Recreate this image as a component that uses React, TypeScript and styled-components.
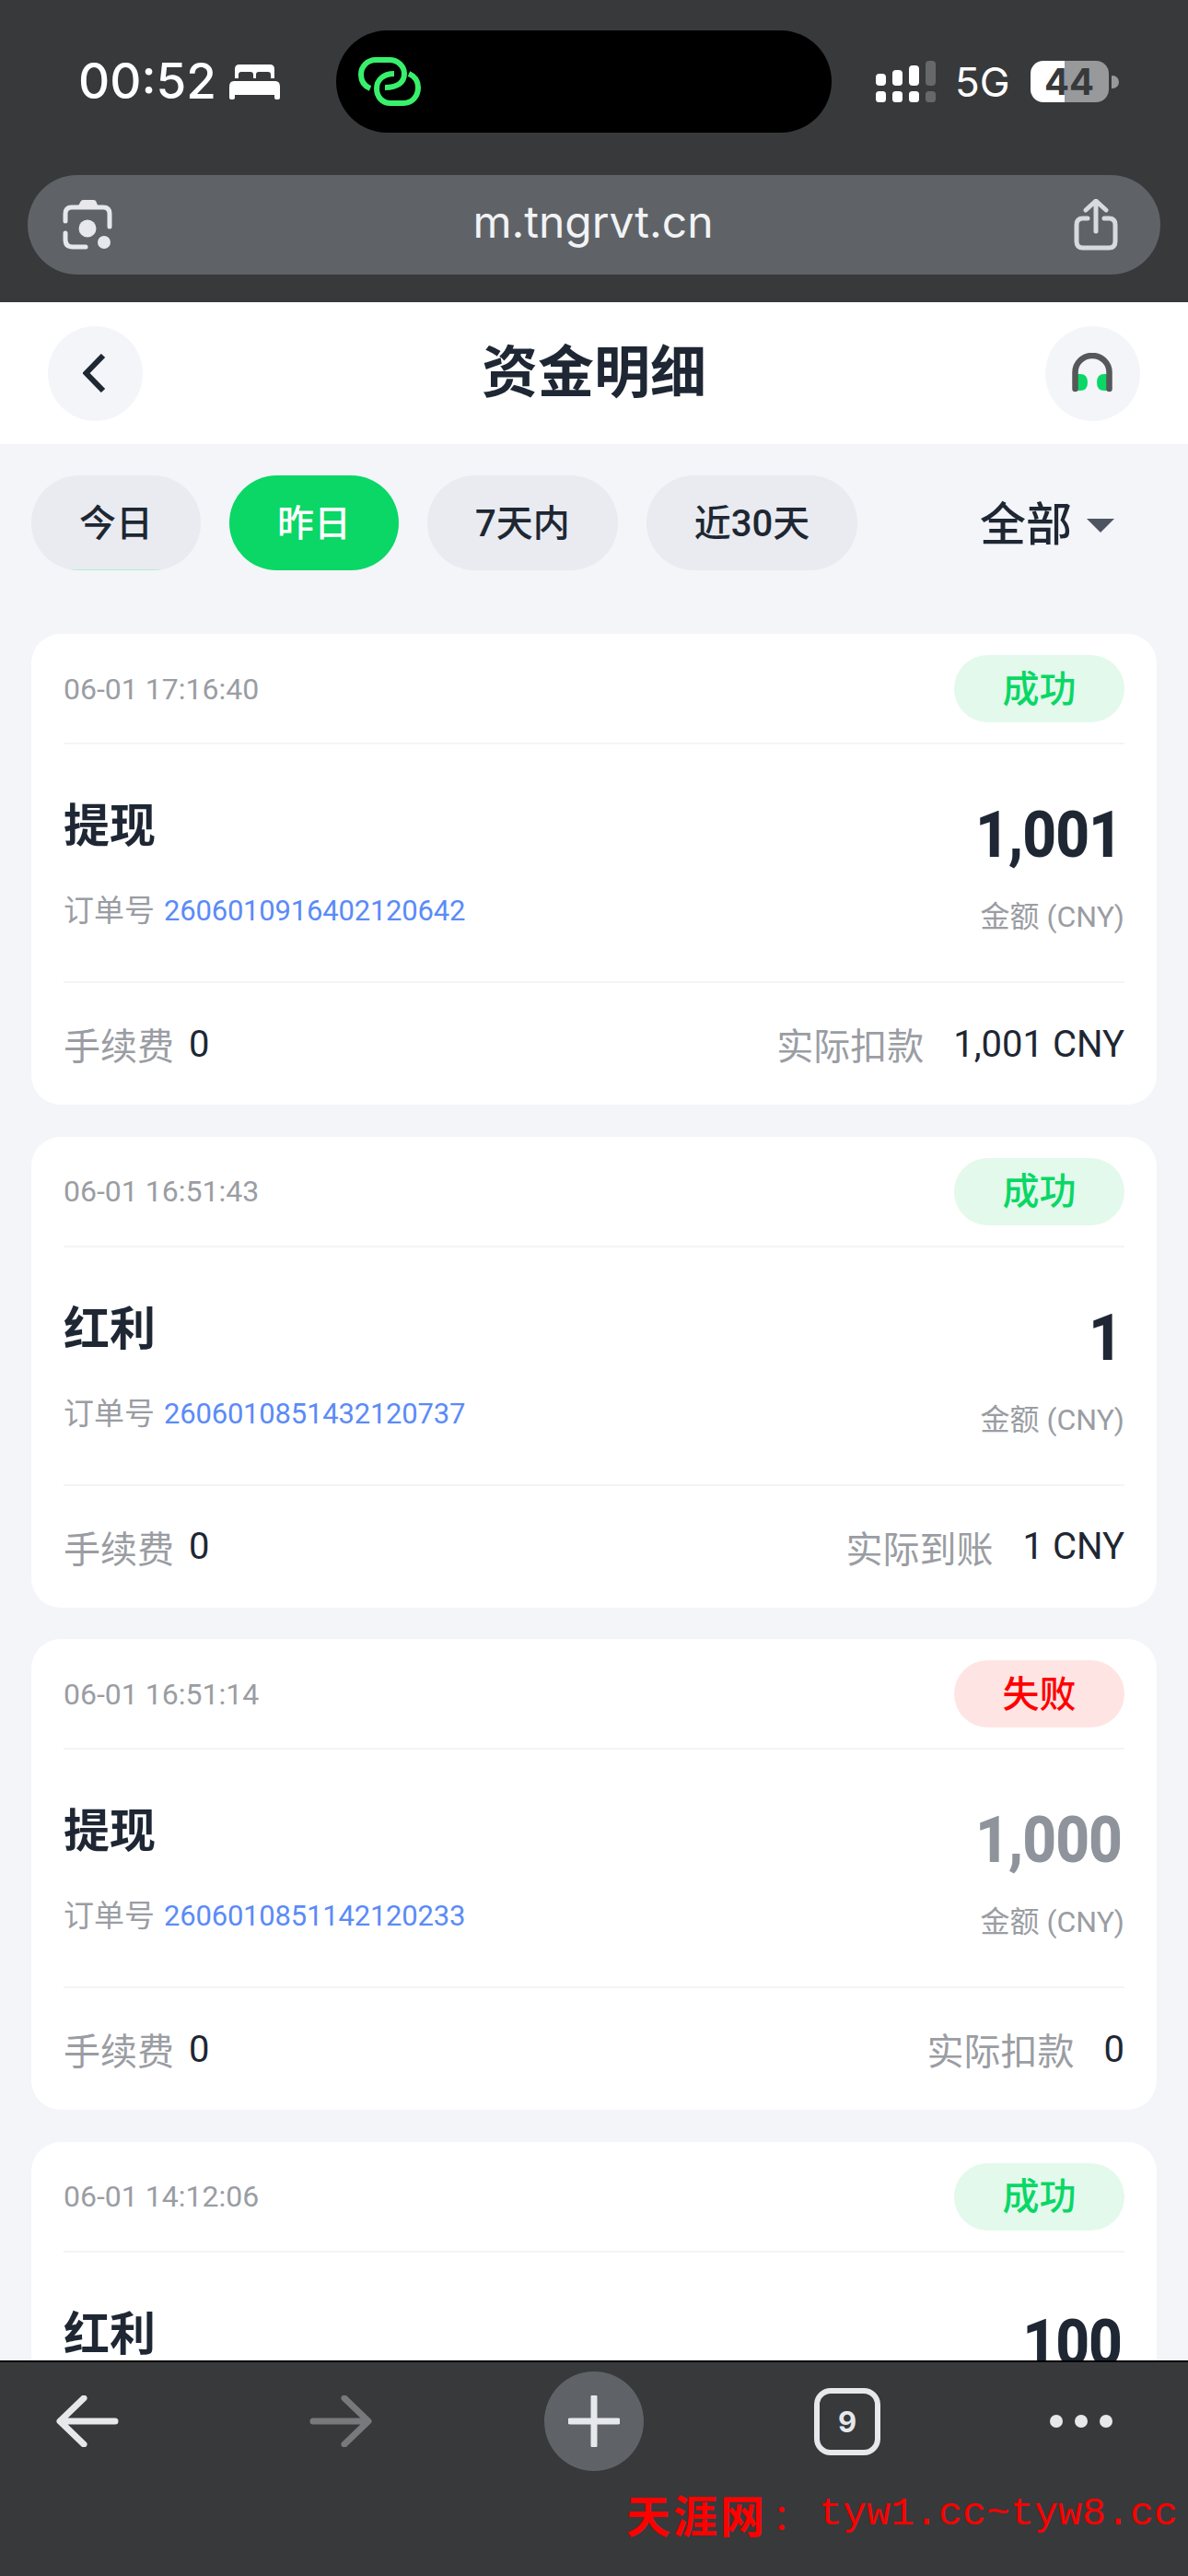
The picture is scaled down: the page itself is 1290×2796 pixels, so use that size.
import React from 'react';
import styled, { createGlobalStyle } from 'styled-components';

const GlobalStyle = createGlobalStyle`
html, body {
  margin: 0;
  padding: 0;
  background: #f3f5f9;
  font-family: Roboto, "Noto Sans CJK SC", sans-serif;
}
* { box-sizing: border-box; }
`;

interface Record {
  time: string;
  status: 'ok' | 'fail';
  title: string;
  amount: string;
  muted?: boolean;
  // the last card runs under the toolbar, only its top part is on screen
  order?: string;
  payLabel?: string;
  payValue?: string;
}

const records: Record[] = [
  { time: '06-01 17:16:40', status: 'ok', title: '提现', order: '2606010916402120642', amount: '1,001', payLabel: '实际扣款', payValue: '1,001 CNY' },
  { time: '06-01 16:51:43', status: 'ok', title: '红利', order: '2606010851432120737', amount: '1', payLabel: '实际到账', payValue: '1 CNY' },
  { time: '06-01 16:51:14', status: 'fail', title: '提现', order: '2606010851142120233', amount: '1,000', muted: true, payLabel: '实际扣款', payValue: '0' },
  { time: '06-01 14:12:06', status: 'ok', title: '红利', amount: '100' },
];

const tabs = ['今日', '昨日', '7天内', '近30天'];

export default function App() {
  return (
    <Screen>
      <GlobalStyle />
      <TopChrome>
        <StatusBar>
          <StatusLeft>
            <Clock>00:52</Clock>
            <BedIcon />
          </StatusLeft>
          <Island>
            <LinkIcon />
          </Island>
          <StatusRight>
            <SignalIcon />
            <Network>5G</Network>
            <Battery>44</Battery>
            <BatteryTip />
          </StatusRight>
        </StatusBar>
        <AddressBar>
          <LensIcon />
          <Url>m.tngrvt.cn</Url>
          <ShareIcon />
        </AddressBar>
      </TopChrome>

      <Content>
        <Header>
          <RoundButton>
            <svg width="28" height="42" viewBox="0 0 28 42" fill="none">
              <path d="M22 2 L3.5 21 L22 40" stroke="#1e2733" strokeWidth="6" />
            </svg>
          </RoundButton>
          <PageTitle>资金明细</PageTitle>
          <RoundButton>
            <HeadsetIcon />
          </RoundButton>
        </Header>

        <Filters>
          {tabs.map((tab, i) => (
            <Pill key={tab} $active={i === 1} $marked={i === 0}>{tab}</Pill>
          ))}
          <AllSelect>
            <span>全部</span>
            <Caret />
          </AllSelect>
        </Filters>

        <List>
          {records.map((r) => (
            <Card key={r.time}>
              <CardHead>
                <Time>{r.time}</Time>
                <Badge $status={r.status}>{r.status === 'ok' ? '成功' : '失败'}</Badge>
              </CardHead>
              <CardBody>
                <div>
                  <RecordTitle>{r.title}</RecordTitle>
                  {r.order && (
                    <OrderLine>
                      <span>订单号</span>
                      <OrderNo>{r.order}</OrderNo>
                    </OrderLine>
                  )}
                </div>
                <AmountCol>
                  <Amount $muted={r.muted}>{r.amount}</Amount>
                  {r.order && <AmountLabel>金额 (CNY)</AmountLabel>}
                </AmountCol>
              </CardBody>
              {r.payLabel && (
                <CardFoot>
                  <FootGroup>
                    <FootLabel>手续费</FootLabel>
                    <FootValue>0</FootValue>
                  </FootGroup>
                  <FootGroup $wide>
                    <FootLabel>{r.payLabel}</FootLabel>
                    <FootValue>{r.payValue}</FootValue>
                  </FootGroup>
                </CardFoot>
              )}
            </Card>
          ))}
        </List>
      </Content>

      <BottomBar>
        <BarSlot><ArrowIcon color="#e6e8ec" /></BarSlot>
        <BarSlot><ArrowIcon color="#77797c" flip /></BarSlot>
        <BarSlot>
          <PlusCircle>
            <svg width="56" height="56" viewBox="0 0 56 56">
              <path d="M28 2 V54 M2 28 H54" stroke="#e6e8ec" strokeWidth="7" strokeLinecap="round" />
            </svg>
          </PlusCircle>
        </BarSlot>
        <BarSlot><TabCount>9</TabCount></BarSlot>
        <BarSlot $start>
          <Dots><i /><i /><i /></Dots>
        </BarSlot>
        <Watermark>
          <b>天涯网</b>
          <em>：</em>
          <span>tyw1.cc~tyw8.cc</span>
        </Watermark>
      </BottomBar>
    </Screen>
  );
}

function BedIcon() {
  return (
    <svg width="55" height="38" viewBox="0 0 55 38" fill="#fff">
      <path d="M6 15 V5 Q6 0 11 0 H44 Q49 0 49 5 V15 H45 V11 Q45 8 42 8 H32 Q29 8 29 11 V15 H26 V11 Q26 8 23 8 H13 Q10 8 10 11 V15 Z" />
      <path d="M5 18 H50 Q55 18 55 24 V36 Q55 38 53 38 H51 Q49 38 49 36 V33 H6 V36 Q6 38 4 38 H2 Q0 38 0 36 V24 Q0 18 5 18 Z" />
    </svg>
  );
}

function LinkIcon() {
  return (
    <svg width="68" height="53" viewBox="0 0 68 53" fill="none" stroke="#38f06c" strokeWidth="6">
      <path d="M13 34 C6 31 3 25 3 19 C3 10 10 3 19 3 H34 C43 3 50 10 50 18 C50 27 43 33 29 33" />
      <path d="M55 18 C62 21 65 27 65 33 C65 43 58 50 49 50 H35 C26 50 20 43 20 34 C20 25 27 18 39 18" />
    </svg>
  );
}

function SignalIcon() {
  const cols = [
    { x: 0, top: 14, c: '#fff' },
    { x: 18, top: 10, c: '#fff' },
    { x: 36, top: 5, c: '#fff' },
    { x: 54, top: 0, c: '#66686a' },
  ];
  return (
    <svg width="65" height="45" viewBox="0 0 65 45">
      {cols.map((col) => (
        <g key={col.x} fill={col.c}>
          <rect x={col.x} y={col.top} width="11" height={27 - col.top} rx="4" />
          <rect x={col.x} y="33" width="11" height="12" rx="3.5" />
        </g>
      ))}
    </svg>
  );
}

function LensIcon() {
  return (
    <svg width="54" height="54" viewBox="0 0 54 54" fill="none">
      <path d="M16 8 L20 1 Q21 0 23 0 H33 Q35 0 36 1 L39 8 Z" fill="#e6e8ec" />
      <path d="M3 23 V15 Q3 8 10 8 H44 Q51 8 51 15 V29" stroke="#e6e8ec" strokeWidth="5" strokeLinecap="round" />
      <path d="M3 36 V43 Q3 51 11 51 H25" stroke="#e6e8ec" strokeWidth="5" strokeLinecap="round" />
      <circle cx="27" cy="31" r="9.5" fill="#e6e8ec" />
      <circle cx="45" cy="46" r="7" fill="#e6e8ec" />
    </svg>
  );
}

function ShareIcon() {
  return (
    <svg width="48" height="56" viewBox="0 0 48 56" fill="none" stroke="#d8dade" strokeWidth="5" strokeLinecap="round" strokeLinejoin="round">
      <path d="M15 21 H10 Q3 21 3 28 V46 Q3 53 10 53 H38 Q45 53 45 46 V28 Q45 21 38 21 H33" />
      <path d="M24 35 V3 M13 12 L24 2 L35 12" />
    </svg>
  );
}

function HeadsetIcon() {
  return (
    <svg width="44" height="44" viewBox="0 0 44 44" fill="none">
      <path d="M6 23 H9 Q17 23 17 32 Q17 41 9 41 H6 Z" fill="#0ad765" />
      <path d="M38 23 H35 Q27 23 27 32 Q27 41 35 41 H38 Z" fill="#0ad765" />
      <path d="M3.5 39 V21 A18.5 18 0 0 1 40.5 21 V39" stroke="#555759" strokeWidth="6.5" strokeLinecap="round" />
    </svg>
  );
}

function ArrowIcon({ color, flip }: { color: string; flip?: boolean }) {
  return (
    <svg width="68" height="56" viewBox="0 0 68 56" fill="none" style={flip ? { transform: 'scaleX(-1)' } : undefined}>
      <path d="M64 28 H6 M30 3 L4 28 L30 53" stroke={color} strokeWidth="7" strokeLinecap="round" strokeLinejoin="round" />
    </svg>
  );
}

const Screen = styled.div`
  position: relative;
  width: 1290px;
  height: 2796px;
  display: flex;
  flex-direction: column;
  overflow: hidden;
  background: #f3f5f9;
`;

const TopChrome = styled.header`
  height: 328px;
  flex: none;
  background: #37393b;
  padding-top: 33px;
`;

const StatusBar = styled.div`
  display: grid;
  grid-template-columns: 365px 538px 1fr;
  height: 111px;
`;

const StatusLeft = styled.div`
  display: flex;
  align-items: center;
  gap: 14px;
  padding-left: 85px;
`;

const Clock = styled.span`
  font-family: Inter, sans-serif;
  font-size: 53px;
  font-weight: 500;
  color: #fff;
  line-height: 1;
`;

const Island = styled.div`
  background: #000;
  border-radius: 56px;
  display: flex;
  align-items: center;
  padding-left: 24px;
`;

const StatusRight = styled.div`
  display: flex;
  align-items: center;
  padding-left: 48px;
`;

const Network = styled.span`
  font-family: Inter, sans-serif;
  font-size: 44px;
  color: #fff;
  margin: 0 22px 0 21px;
  line-height: 1;
`;

const Battery = styled.span`
  width: 85px;
  height: 45px;
  border-radius: 14px;
  background: linear-gradient(to right, #fff 0 37px, #98999b 37px 100%);
  color: #37393b;
  font-family: Inter, sans-serif;
  font-size: 40px;
  font-weight: 700;
  line-height: 45px;
  text-align: center;
`;

const BatteryTip = styled.i`
  width: 8px;
  height: 14px;
  margin-left: 3px;
  background: #98999b;
  border-radius: 0 7px 7px 0;
`;

const AddressBar = styled.div`
  height: 108px;
  margin: 46px 30px 0;
  padding: 0 46px 0 38px;
  border-radius: 54px;
  background: #5f6367;
  display: flex;
  align-items: center;
  justify-content: space-between;
`;

const Url = styled.span`
  font-family: Inter, sans-serif;
  font-size: 48px;
  line-height: 60px;
  padding-bottom: 6px;
  color: #f2f3f5;
`;

const Content = styled.main`
  flex: 1;
  min-height: 0;
  overflow: hidden;
`;

const Header = styled.div`
  height: 154px;
  background: #fff;
  padding: 0 52px;
  display: flex;
  align-items: center;
  justify-content: space-between;
`;

const RoundButton = styled.div`
  width: 103px;
  height: 103px;
  border-radius: 50%;
  background: #f3f5f9;
  display: flex;
  align-items: center;
  justify-content: center;
`;

const PageTitle = styled.h1`
  margin: 0;
  font-size: 61px;
  font-weight: 700;
  color: #1e2733;
  line-height: 1;
`;

const Filters = styled.div`
  display: flex;
  align-items: center;
  gap: 31px;
  padding: 34px 80px 0 34px;
`;

const Pill = styled.div<{ $active?: boolean; $marked?: boolean }>`
  position: relative;
  height: 103px;
  padding: 0 52px 6px;
  border-radius: 52px;
  display: flex;
  align-items: center;
  font-size: 40px;
  font-weight: 500;
  overflow: hidden;
  color: ${({ $active }) => ($active ? '#fff' : '#1e2733')};
  background: ${({ $active }) => ($active ? '#0ad765' : '#e9ebf0')};
  ${({ $marked }) => $marked && `
  &::after {
    content: '';
    position: absolute;
    left: 40px;
    right: 40px;
    bottom: 0;
    height: 1px;
    background: #b5edcd;
  }
  `}
`;

const AllSelect = styled.div`
  margin-left: auto;
  display: flex;
  align-items: center;
  gap: 16px;
  font-size: 50px;
  font-weight: 500;
  color: #1e2733;
  span {
    padding-bottom: 6px;
  }
`;

const Caret = styled.i`
  width: 0;
  height: 0;
  margin-top: 6px;
  border-left: 15px solid transparent;
  border-right: 15px solid transparent;
  border-top: 15px solid #4f5560;
`;

const List = styled.div`
  display: flex;
  flex-direction: column;
  gap: 34.5px;
  padding: 69px 34px 0;
`;

const Card = styled.article`
  height: 511px;
  flex: none;
  background: #fff;
  border-radius: 32px;
  padding: 24px 35px 0;
`;

const CardHead = styled.div`
  height: 96px;
  padding-bottom: 23px;
  border-bottom: 2px solid #f3f4f6;
  display: flex;
  align-items: center;
  justify-content: space-between;
`;

const Time = styled.span`
  font-size: 32px;
  color: #9a9da3;
`;

const Badge = styled.span<{ $status: 'ok' | 'fail' }>`
  width: 185px;
  height: 73px;
  padding-bottom: 6px;
  border-radius: 37px;
  display: flex;
  align-items: center;
  justify-content: center;
  font-size: 40px;
  font-weight: 500;
  color: ${({ $status }) => ($status === 'ok' ? '#0ad765' : '#ff0000')};
  background: ${({ $status }) => ($status === 'ok' ? '#e3f9ec' : '#ffe4e4')};
`;

const CardBody = styled.div`
  height: 259px;
  padding-top: 59px;
  border-bottom: 2px solid #f3f4f6;
  display: flex;
  justify-content: space-between;
`;

const RecordTitle = styled.div`
  font-size: 50px;
  font-weight: 700;
  line-height: 60px;
  color: #1e2733;
`;

const OrderLine = styled.div`
  margin-top: 40px;
  font-size: 33px;
  line-height: 44px;
  color: #9a9da3;
  display: flex;
  gap: 10px;
`;

const OrderNo = styled.span`
  font-size: 31px;
  letter-spacing: -0.2px;
  color: #5b8bf7;
`;

const AmountCol = styled.div`
  display: flex;
  flex-direction: column;
  align-items: flex-end;
`;

const Amount = styled.div<{ $muted?: boolean }>`
  margin-top: 5px;
  font-size: 64px;
  font-weight: 800;
  line-height: 70px;
  letter-spacing: -1px;
  padding-right: 3px;
  transform: scaleY(1.1);
  color: ${({ $muted }) => ($muted ? '#8f939b' : '#1e2733')};
`;

const AmountLabel = styled.div`
  margin-top: 33px;
  font-size: 32px;
  line-height: 40px;
  color: #9a9da3;
`;

const CardFoot = styled.div`
  height: 132px;
  display: flex;
  align-items: center;
  justify-content: space-between;
`;

const FootGroup = styled.div<{ $wide?: boolean }>`
  display: flex;
  align-items: center;
  gap: ${({ $wide }) => ($wide ? '32px' : '16px')};
`;

const FootLabel = styled.span`
  font-size: 40px;
  color: #9a9da3;
`;

const FootValue = styled.span`
  font-size: 40px;
  color: #1e2733;
`;

const BottomBar = styled.footer`
  position: relative;
  height: 234px;
  flex: none;
  background: #37393b;
  border-top: 2px solid #000;
  padding: 9px 40px 0;
  display: flex;
  gap: 165px;
`;

const BarSlot = styled.div<{ $start?: boolean }>`
  width: 110px;
  height: 110px;
  flex: none;
  display: flex;
  align-items: center;
  justify-content: ${({ $start }) => ($start ? 'flex-start' : 'center')};
`;

const PlusCircle = styled.div`
  width: 108px;
  height: 108px;
  border-radius: 50%;
  background: #5f6367;
  display: flex;
  align-items: center;
  justify-content: center;
`;

const TabCount = styled.div`
  width: 72px;
  height: 73px;
  border: 6px solid #e6e8ec;
  border-radius: 18px;
  display: flex;
  align-items: center;
  justify-content: center;
  font-family: Inter, sans-serif;
  font-size: 31px;
  font-weight: 700;
  color: #e6e8ec;
`;

const Dots = styled.div`
  display: flex;
  gap: 13px;
  i {
    width: 14px;
    height: 14px;
    border-radius: 50%;
    background: #e6e8ec;
  }
`;

const Watermark = styled.div`
  position: absolute;
  left: 680px;
  top: 129px;
  display: flex;
  align-items: center;
  color: #ff0000;
  white-space: nowrap;
  b {
    font-family: "Noto Sans CJK SC", serif;
    font-size: 48px;
    font-weight: 700;
    letter-spacing: 3px;
  }
  em {
    font-family: "Noto Sans CJK SC", serif;
    font-style: normal;
    font-size: 38px;
    width: 56px;
    padding-left: 6px;
  }
  span {
    font-family: "Liberation Mono", monospace;
    font-size: 43px;
    letter-spacing: 0.2px;
  }
`;
